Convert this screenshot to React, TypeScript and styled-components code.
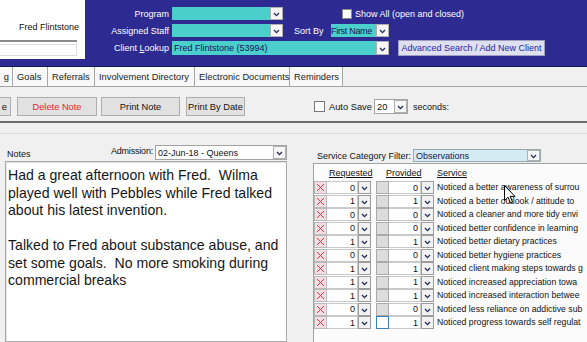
import React from "react";
import styled, { createGlobalStyle } from "styled-components";

const GlobalStyle = createGlobalStyle`
  html, body { margin: 0; padding: 0; background: #f0f0f0; overflow: hidden; }
  body { font-family: "Liberation Sans", Arial, sans-serif; font-size: 9px; color: #111; }
  * { box-sizing: border-box; }
`;

const Screen = styled.div`
  position: relative;
  width: 587px;
  height: 342px;
  overflow: hidden;
  display: flex;
  flex-direction: column;
  background: #f0f0f0;
`;

/* ---------- header ---------- */
const Header = styled.header`
  flex: none;
  height: 67px;
  display: flex;
  align-items: flex-start;
  background: #2d2a92;
  border-bottom: 1px solid #17155c;
`;
const ClientCard = styled.div`
  width: 85px;
  height: 59px;
  background: #fff;
  display: flex;
  flex-direction: column;
  padding-top: 22px;
`;
const ClientName = styled.div`
  height: 11px;
  line-height: 11px;
  text-align: right;
  padding-right: 6px;
  font-size: 9px;
  color: #111;
`;
const ClientRule = styled.div`
  margin-top: 7px;
  width: 77px;
  height: 2px;
  background: #8c8c8c;
`;
const ClientInput = styled.div`
  margin-top: 2px;
  width: 77px;
  height: 12px;
  border: 1px solid #dcdcdc;
  border-left: none;
`;
const HeaderForm = styled.div`
  display: flex;
  flex-direction: column;
  gap: 4px;
  padding-top: 7px;
`;
const FormRow = styled.div<{ $h?: number }>`
  display: flex;
  align-items: center;
  height: ${(p) => p.$h ?? 13}px;
`;
const FormLabel = styled.span<{ $w?: number; $align?: string; $ml?: number }>`
  width: ${(p) => p.$w ?? 87}px;
  margin-left: ${(p) => p.$ml ?? 0}px;
  text-align: ${(p) => p.$align ?? "right"};
  padding-right: ${(p) => (p.$align === "left" ? 0 : 3)}px;
  color: #fff;
  font-size: 9px;
  white-space: nowrap;
`;
const Select = styled.div<{ $w: number; $h?: number; $bg?: string; $border?: string; $ml?: number }>`
  flex: none;
  display: flex;
  width: ${(p) => p.$w}px;
  height: ${(p) => p.$h ?? 13}px;
  margin-left: ${(p) => p.$ml ?? 0}px;
  background: ${(p) => p.$bg ?? "#fff"};
  border: ${(p) => p.$border ?? "none"};
`;
const SelectValue = styled.span<{ $color?: string; $size?: number; $tight?: boolean }>`
  flex: 1;
  display: flex;
  align-items: center;
  padding-left: ${(p) => (p.$tight ? 0 : 2)}px;
  overflow: hidden;
  white-space: nowrap;
  color: ${(p) => p.$color ?? "#14145a"};
  font-size: ${(p) => p.$size ?? 9}px;
  letter-spacing: ${(p) => (p.$tight ? "-0.3px" : "0")};
`;
const DropButton = styled.span<{ $w?: number }>`
  flex: none;
  width: ${(p) => p.$w ?? 13}px;
  display: flex;
  align-items: center;
  justify-content: center;
  padding-top: 2px;
  background: #f6f6f6;
  border: 1px solid #b0b0b0;
`;
const CheckSquare = styled.span<{ $size?: number; $bg?: string; $border?: string; $ml?: number }>`
  flex: none;
  display: inline-block;
  width: ${(p) => p.$size ?? 10}px;
  height: ${(p) => p.$size ?? 10}px;
  margin-left: ${(p) => p.$ml ?? 0}px;
  background: ${(p) => p.$bg ?? "#fff"};
  border: 1px solid ${(p) => p.$border ?? "#8a8a8a"};
`;
const HeaderText = styled.span<{ $ml?: number; $dark?: boolean }>`
  margin-left: ${(p) => p.$ml ?? 0}px;
  color: ${(p) => (p.$dark ? "#111" : "#fff")};
  font-size: 9px;
  white-space: nowrap;
`;
const AdvancedButton = styled.button`
  margin-left: 9px;
  width: 147px;
  height: 16px;
  padding: 0;
  background: #dedfef;
  border: 1px solid #9d9dc4;
  color: #2626a6;
  font-family: inherit;
  font-size: 9px;
`;

/* ---------- tabs & toolbar ---------- */
const TabStrip = styled.nav`
  flex: none;
  height: 20px;
  display: flex;
  border-bottom: 1px solid #a3a3a3;
  background: #f0f0f0;
`;
const Tab = styled.div<{ $w: number; $clip?: boolean }>`
  flex: none;
  width: ${(p) => p.$w}px;
  display: flex;
  align-items: center;
  justify-content: ${(p) => (p.$clip ? "flex-end" : "flex-start")};
  padding: ${(p) => (p.$clip ? "0 3px 0 0" : "0 0 0 4px")};
  white-space: nowrap;
  background: #f8f8f8;
  border-right: 1px solid #a6a6a6;
  font-size: 9.3px;
  color: #222;
`;
const Toolbar = styled.div`
  flex: none;
  height: 34px;
  display: flex;
  align-items: flex-start;
  padding-top: 10px;
`;
const ToolButton = styled.button<{ $w: number; $ml?: number; $color?: string; $clip?: boolean }>`
  flex: none;
  width: ${(p) => p.$w}px;
  height: 19px;
  margin-left: ${(p) => p.$ml ?? 0}px;
  padding: 0;
  display: flex;
  align-items: center;
  justify-content: ${(p) => (p.$clip ? "flex-end" : "center")};
  white-space: nowrap;
  background: #e1e1e1;
  border: 1px solid #adadad;
  ${(p) => (p.$clip ? "border-left: none; padding-right: 3px;" : "")}
  color: ${(p) => p.$color ?? "#111"};
  font-family: inherit;
  font-size: 9.3px;
`;
const AutoSave = styled.div`
  display: flex;
  align-items: center;
  height: 19px;
  margin-left: 69px;
  font-size: 9.3px;
`;
const AutoSaveLabel = styled.span`
  width: 49px;
  padding-left: 4px;
  white-space: nowrap;
`;
const Separator = styled.div`
  flex: none;
  height: 2px;
  background: #6c6c6c;
`;
const Band = styled.div`
  flex: none;
  height: 11px;
  border-bottom: 1px solid #dadada;
`;

/* ---------- panes ---------- */
const Panes = styled.div`
  flex: 1;
  display: flex;
  min-height: 0;
`;
const NotesPane = styled.section`
  flex: none;
  width: 300px;
  display: flex;
  flex-direction: column;
  padding: 11px 0 0 5px;
`;
const NotesHead = styled.div`
  width: 282px;
  height: 15px;
  display: flex;
  align-items: center;
`;
const NotesLabel = styled.span`
  flex: 1;
  padding: 3px 0 0 2px;
  font-size: 9px;
`;
const AdmissionLabel = styled.span`
  padding: 0 2px 4px 0;
  font-size: 9px;
  letter-spacing: -0.2px;
`;
const NotesBody = styled.div`
  flex: 1;
  width: 282px;
  margin-top: 1px;
  padding: 5px 2px;
  background: #fff;
  border: 1px solid #a9a9a9;
  box-shadow: inset 1px 1px 0 #e2e2e2;
  font-size: 14.1px;
  line-height: 17.5px;
  color: #161616;
  white-space: pre-wrap;
`;
const ServicePane = styled.section`
  flex: 1;
  display: flex;
  flex-direction: column;
  padding: 15px 0 0 13px;
`;
const FilterRow = styled.div`
  height: 13px;
  display: flex;
  align-items: center;
`;
const FilterLabel = styled.span`
  width: 100px;
  padding-left: 4px;
  font-size: 9px;
  white-space: nowrap;
`;
const ServiceBox = styled.div`
  flex: 1;
  width: 274px;
  margin-top: 1px;
  background: #fbfbfb;
  border: 1px solid #a2a2a2;
  border-right: none;
  border-bottom: none;
  overflow: hidden;
`;
const ServiceHead = styled.div`
  height: 17px;
  display: flex;
  align-items: center;
  font-size: 9px;
`;
const HeadCell = styled.span<{ $w: number }>`
  width: ${(p) => p.$w}px;
  flex: none;
  text-decoration: underline;
  white-space: nowrap;
`;
const ServiceRow = styled.div`
  height: 13.5px;
  display: flex;
  align-items: flex-start;
  font-size: 8.7px;
`;
const RemoveCell = styled.span`
  flex: none;
  width: 13px;
  height: 13px;
  display: flex;
  align-items: center;
  justify-content: center;
  background: #f6dde4;
  border: 1px solid #b9b9b9;
`;
const NumCell = styled.span<{ $w: number }>`
  flex: none;
  width: ${(p) => p.$w}px;
  height: 13px;
  padding-right: 2px;
  display: flex;
  align-items: center;
  justify-content: flex-end;
  background: #fff;
  border: 1px solid #cacaca;
  border-left: none;
  font-size: 9px;
`;
const RowButton = styled(DropButton)`
  height: 13px;
  background: #f2f2f2;
  border-color: #9c9c9c;
`;
const ProvidedCheck = styled.span<{ $focus?: boolean }>`
  flex: none;
  width: 13px;
  height: 13px;
  margin-left: 5px;
  background: ${(p) => (p.$focus ? "#fff" : "#dcdcdc")};
  border: 1px solid ${(p) => (p.$focus ? "#3e7fb5" : "#a9a9a9")};
`;
const ServiceName = styled.span`
  flex: 1;
  min-width: 0;
  padding-left: 3px;
  line-height: 13px;
  white-space: nowrap;
  overflow: hidden;
`;
const Cursor = styled.svg`
  position: absolute;
  left: 504px;
  top: 185px;
`;

const Chevron = () => (
  <svg width="7" height="5" viewBox="0 0 7 5">
    <polyline points="1,1 3.5,3.6 6,1" fill="none" stroke="#1f2b58" strokeWidth="1.3" />
  </svg>
);

const RedX = () => (
  <svg width="9" height="9" viewBox="0 0 9 9">
    <path d="M1 1 L8 8 M8 1 L1 8" stroke="#e2374a" strokeWidth="1" fill="none" />
  </svg>
);

const services = [
  { req: 0, prov: 0, name: "Noticed a better awareness of surrou" },
  { req: 1, prov: 1, name: "Noticed a better outlook / attitude to" },
  { req: 0, prov: 0, name: "Noticed a cleaner and more tidy envi" },
  { req: 0, prov: 0, name: "Noticed better confidence in learning" },
  { req: 1, prov: 1, name: "Noticed better dietary practices" },
  { req: 0, prov: 0, name: "Noticed better hygiene practices" },
  { req: 1, prov: 1, name: "Noticed client making steps towards g" },
  { req: 1, prov: 1, name: "Noticed increased appreciation towa" },
  { req: 1, prov: 1, name: "Noticed increased interaction betwee" },
  { req: 0, prov: 0, name: "Noticed less reliance on addictive sub" },
  { req: 1, prov: 1, name: "Noticed progress towards self regulat" },
];

const noteText =
  "Had a great afternoon with Fred.  Wilma\nplayed well with Pebbles while Fred talked\nabout his latest invention.\n\nTalked to Fred about substance abuse, and\nset some goals.  No more smoking during\ncommercial breaks";

const App: React.FC = () => (
  <Screen>
    <GlobalStyle />
    <Header>
      <ClientCard>
        <ClientName>Fred Flintstone</ClientName>
        <ClientRule />
        <ClientInput />
      </ClientCard>
      <HeaderForm>
        <FormRow>
          <FormLabel>Program</FormLabel>
          <Select $w={111} $bg="#4bcfcb">
            <SelectValue />
            <DropButton><Chevron /></DropButton>
          </Select>
          <CheckSquare $ml={59} />
          <HeaderText $ml={3}>Show All (open and closed)</HeaderText>
        </FormRow>
        <FormRow>
          <FormLabel>Assigned Staff</FormLabel>
          <Select $w={111} $bg="#4bcfcb">
            <SelectValue />
            <DropButton><Chevron /></DropButton>
          </Select>
          <FormLabel $w={37} $ml={11} $align="left">Sort By</FormLabel>
          <Select $w={58} $bg="#4bcfcb">
            <SelectValue $tight>First Name</SelectValue>
            <DropButton><Chevron /></DropButton>
          </Select>
        </FormRow>
        <FormRow $h={14}>
          <FormLabel>
            Client <u>L</u>ookup
          </FormLabel>
          <Select $w={217} $h={14} $bg="#4bcfcb">
            <SelectValue>Fred Flintstone (53994)</SelectValue>
            <DropButton><Chevron /></DropButton>
          </Select>
          <AdvancedButton>Advanced Search / Add New Client</AdvancedButton>
        </FormRow>
      </HeaderForm>
    </Header>

    <TabStrip>
      <Tab $w={13} $clip>g</Tab>
      <Tab $w={35}>Goals</Tab>
      <Tab $w={47}>Referrals</Tab>
      <Tab $w={100}>Involvement Directory</Tab>
      <Tab $w={95}>Electronic Documents</Tab>
      <Tab $w={53}>Reminders</Tab>
    </TabStrip>

    <Toolbar>
      <ToolButton $w={11} $clip>e</ToolButton>
      <ToolButton $w={80} $ml={6} $color="#e3262e">Delete Note</ToolButton>
      <ToolButton $w={79} $ml={4}>Print Note</ToolButton>
      <ToolButton $w={59} $ml={6}>Print By Date</ToolButton>
      <AutoSave>
        <CheckSquare $size={11} $border="#7a7a7a" />
        <AutoSaveLabel>Auto Save</AutoSaveLabel>
        <Select $w={34} $h={15} $border="1px solid #a3a3a3">
          <SelectValue $color="#111" $size={9.3}>20</SelectValue>
          <DropButton><Chevron /></DropButton>
        </Select>
        <HeaderText $ml={5} $dark>seconds:</HeaderText>
      </AutoSave>
    </Toolbar>
    <Separator />
    <Band />

    <Panes>
      <NotesPane>
        <NotesHead>
          <NotesLabel>Notes</NotesLabel>
          <AdmissionLabel>Admission:</AdmissionLabel>
          <Select $w={132} $h={15} $border="1px solid #a3a3a3">
            <SelectValue $color="#111">02-Jun-18 - Queens</SelectValue>
            <DropButton><Chevron /></DropButton>
          </Select>
        </NotesHead>
        <NotesBody>{noteText}</NotesBody>
      </NotesPane>

      <ServicePane>
        <FilterRow>
          <FilterLabel>Service Category Filter:</FilterLabel>
          <Select $w={128} $h={13} $bg="#d5ebf3" $border="1px solid #9aa8b0">
            <SelectValue $color="#14145a">Observations</SelectValue>
            <DropButton><Chevron /></DropButton>
          </Select>
        </FilterRow>
        <ServiceBox>
          <ServiceHead>
            <HeadCell $w={15} />
            <HeadCell $w={57}>Requested</HeadCell>
            <HeadCell $w={51}>Provided</HeadCell>
            <HeadCell $w={60}>Service</HeadCell>
          </ServiceHead>
          {services.map((s, i) => (
            <ServiceRow key={s.name}>
              <RemoveCell><RedX /></RemoveCell>
              <NumCell $w={31}>{s.req}</NumCell>
              <RowButton><Chevron /></RowButton>
              <ProvidedCheck $focus={i === services.length - 1} />
              <NumCell $w={32}>{s.prov}</NumCell>
              <RowButton><Chevron /></RowButton>
              <ServiceName>{s.name}</ServiceName>
            </ServiceRow>
          ))}
        </ServiceBox>
      </ServicePane>
    </Panes>

    <Cursor width="12" height="19" viewBox="0 0 12 19">
      <path d="M0.5 0.5 L0.5 15.5 L4 12.2 L6.6 18 L8.6 17.1 L6.1 11.4 L11 11.4 Z" fill="#fff" stroke="#000" strokeWidth="1" />
    </Cursor>
  </Screen>
);

export default App;
